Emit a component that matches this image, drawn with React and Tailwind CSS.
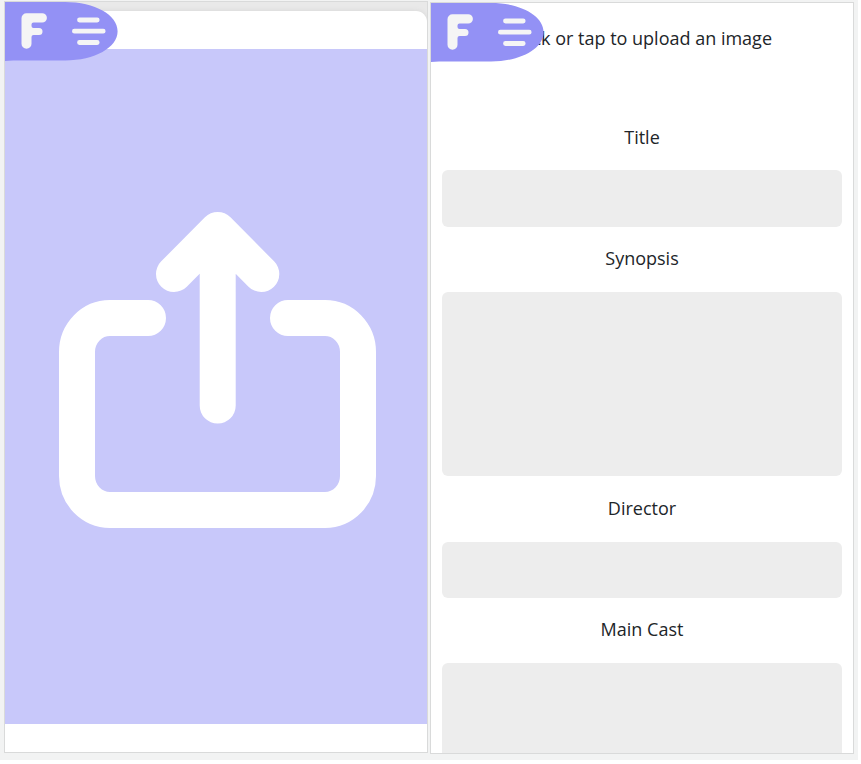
function Logo() {
  return (
    <svg
      className="absolute left-0 top-0 z-10"
      width="114"
      height="60"
      viewBox="0 0 114 60"
      fill="none"
      strokeLinecap="round"
      strokeLinejoin="round"
    >
      <path d="M0 0H60C90 0 112.600 13 112.600 29.200S90 58.400 60 58.400H8L0 58.900Z" fill="#9391f5" />
      <path
        d="M21.500 11.200H37.200A4.600 4.600 0 0 1 37.200 20.600H28.500A2 2 0 0 0 26.500 22.600V24A2 2 0 0 0 28.500 26H34A3.500 3.500 0 0 1 34 33H28.500A2 2 0 0 0 26.500 35V41.700A5 5 0 0 1 16.500 41.700V16.200A5 5 0 0 1 21.500 11.200Z"
        fill="#f5f5f5"
      />
      <path d="M74.500 18H92.200M69.400 29.200H98.200M74.500 40.500H92.200" stroke="#f5f5f5" strokeWidth="4.800" />
    </svg>
  );
}

function UploadIcon() {
  return (
    <svg
      width="318"
      height="318"
      viewBox="59 211 318 318"
      fill="none"
      stroke="white"
      strokeWidth="36"
      strokeLinecap="round"
      strokeLinejoin="round"
    >
      <path d="M148 318H110A33 34 0 0 0 77 352V476A33 34 0 0 0 110 510H325A33 34 0 0 0 358 476V352A33 34 0 0 0 325 318H288" />
      <path d="M217.700 230V405.500M174 274L217.700 230L261.300 274" />
    </svg>
  );
}

function Field({ label, boxClass }) {
  return (
    <label className="flex shrink-0 flex-col">
      <span className="flex h-[65.200px] items-center justify-center pb-[2.400px]">{label}</span>
      <span className={`block rounded-[6px] bg-[#ededed] ${boxClass}`} />
    </label>
  );
}

export default function App() {
  return (
    <div className="h-[764px] w-[861px] overflow-hidden bg-white">
      <main className="flex h-[760px] w-[858px] items-start gap-[2px] bg-[#f2f3f3] pl-1 pt-px font-['Open_Sans',sans-serif] text-[18px] leading-6 text-[#212529]">
        <section className="relative h-[752px] w-[424px] overflow-hidden border border-[#d9dada] bg-[#e9e9e9] pt-[9px]">
          <Logo />
          <div className="flex h-[741px] flex-col overflow-hidden rounded-tr-[11px] bg-white pt-[38.400px] shadow-[0_0_5px_#d5d5d5]">
            <div className="flex h-[674.600px] items-center justify-center bg-[#c8c8fa] pb-[33px] pl-[3px]">
              <UploadIcon />
            </div>
          </div>
        </section>
        <section className="relative mt-px h-[752px] w-[424px] overflow-hidden border border-[#d9dada] bg-white px-[11px]">
          <Logo />
          <div className="flex h-full flex-col">
            <p className="flex h-[70px] shrink-0 items-center justify-center">Click or tap to upload an image</p>
            <form className="flex flex-col pt-[32.200px]">
              <Field label="Title" boxClass="h-[56.200px]" />
              <Field label="Synopsis" boxClass="h-[184.700px]" />
              <Field label="Director" boxClass="h-[56.200px]" />
              <Field label="Main Cast" boxClass="h-[184.700px]" />
            </form>
          </div>
        </section>
      </main>
    </div>
  );
}
